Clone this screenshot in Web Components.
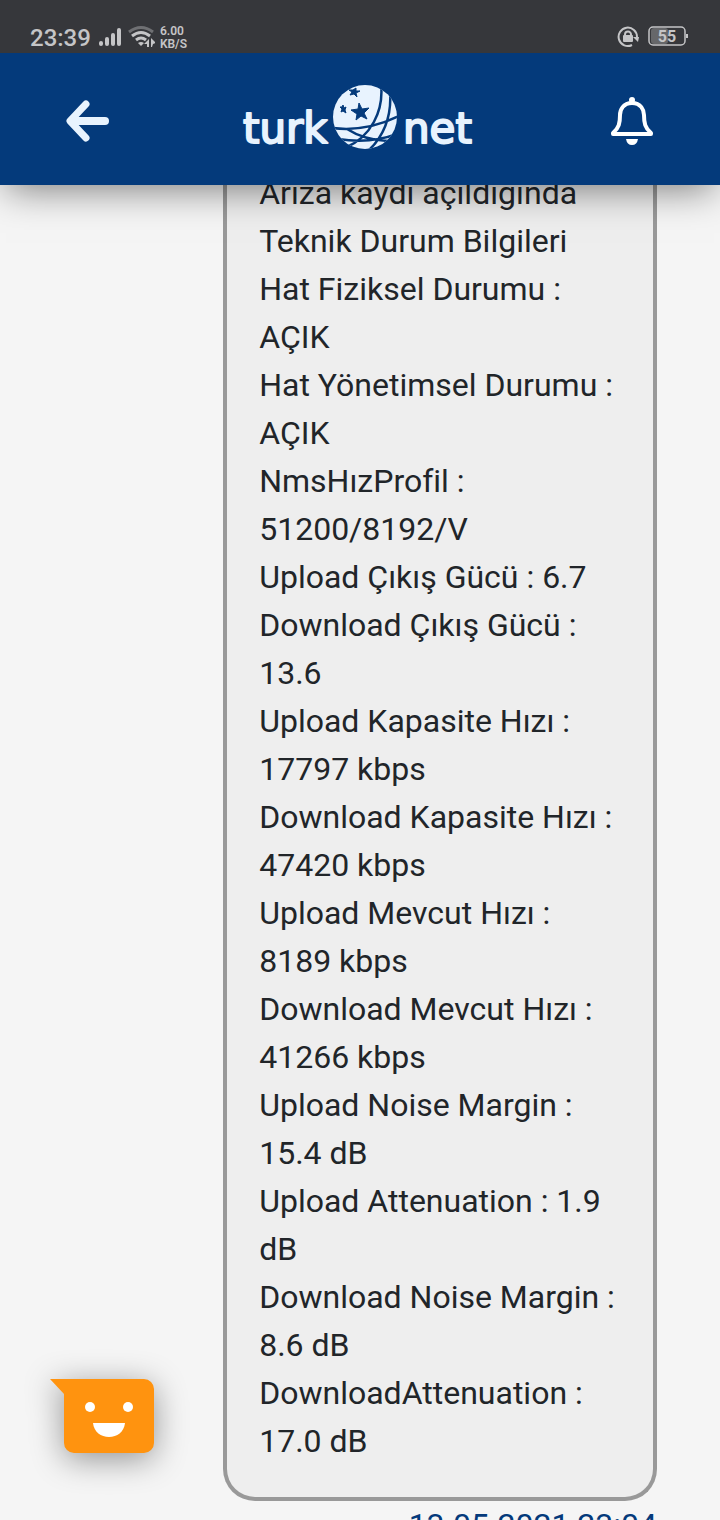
<!DOCTYPE html>
<html lang="tr">
<head>
<meta charset="utf-8">
<meta name="viewport" content="width=device-width">
<title>TurkNet</title>
<style>
html, body { margin: 0; height: 100%; }
body { background: #f5f5f5; overflow: hidden; font-family: Roboto, sans-serif; color: #212529; }
</style>
</head>
<body>
<support-app>
  <status-bar slot="top"></status-bar>
  <app-header slot="top"></app-header>
  <chat-message time="13.05.2021 23:04">Arıza kaydı açıldığında Teknik Durum Bilgileri<br>Hat Fiziksel Durumu : AÇIK<br>Hat Yönetimsel Durumu : AÇIK<br>NmsHızProfil : 51200/8192/V<br>Upload Çıkış Gücü : 6.7<br>Download Çıkış Gücü : 13.6<br>Upload Kapasite Hızı : 17797 kbps<br>Download Kapasite Hızı : 47420 kbps<br>Upload Mevcut Hızı : 8189 kbps<br>Download Mevcut Hızı : 41266 kbps<br>Upload Noise Margin : 15.4 dB<br>Upload Attenuation : 1.9 dB<br>Download Noise Margin : 8.6 dB<br>DownloadAttenuation : 17.0 dB</chat-message>
  <chat-launcher slot="overlay"></chat-launcher>
</support-app>

<script>
const define = (name, html, setup) => {
  const template = document.createElement('template');
  template.innerHTML = html;
  customElements.define(name, class extends HTMLElement {
    constructor() {
      super();
      this.attachShadow({ mode: 'open' }).append(template.content.cloneNode(true));
    }
    connectedCallback() { if (setup) setup(this); }
  });
};

define('support-app', `
<style>
:host { display: flex; flex-direction: column; height: 100vh; overflow: hidden; }
.top { position: relative; z-index: 1; flex: none; box-shadow: 0 10px 36px -6px rgba(0,0,0,.5); }
main { flex: 1; min-height: 0; overflow: hidden; }
</style>
<div class="top"><slot name="top"></slot></div>
<main><slot></slot></main>
<slot name="overlay"></slot>`);

define('status-bar', `
<style>
:host { display: flex; justify-content: space-between; align-items: flex-end; box-sizing: border-box; height: 53px; padding: 0 31px 0 30px; background: #36373b; color: #c5c5c7; }
.group { display: flex; align-items: center; height: 32px; }
.time { font-size: 24px; font-weight: 500; line-height: 32px; padding-top: 2px; }
.signal { margin-left: 8px; }
.wifi { margin-left: 5px; }
.rate { margin-left: 5px; padding-top: 2px; font-size: 12px; font-weight: 600; line-height: 13px; }
svg { display: block; }
.battery { margin-left: 9px; }
</style>
<div class="group">
  <span class="time">23:39</span>
  <svg class="signal" width="24" height="20" fill="currentColor"><rect y="14" width="4" height="5" rx="2"/><rect x="6" y="10" width="4" height="9" rx="2"/><rect x="12" y="6" width="4" height="13" rx="2"/><rect x="18" y="1" width="4" height="18" rx="2"/></svg>
  <svg class="wifi" width="27" height="24" fill="none" stroke="currentColor" stroke-width="3"><path d="M1 7Q13-2 25 7" opacity=".4"/><path d="M4 11Q13 4 22 11M8 15Q13 11 18 15"/><path d="M10 18q3-2 6 0l-3 3z" fill="currentColor" stroke="none"/><path d="M16 19l5-5v8h-2v-3zM23 13l5 5-3 1-1 3h-1z" fill="currentColor" stroke="none"/></svg>
  <span class="rate">6.00<br>KB/S</span>
</div>
<div class="group">
  <svg width="22" height="24" fill="none" stroke="currentColor" stroke-width="2"><path d="M15 20A9.200 9.200 0 1 1 20 12"/><path d="M16 12h6l-1 5z" fill="currentColor" stroke="none"/><path d="M8 11V9.500a3 3 0 0 1 6 0V11"/><rect x="6" y="10" width="10" height="7" rx="1" fill="currentColor" stroke="none"/></svg>
  <svg class="battery" width="41" height="22"><rect x="3" y="2" width="17" height="16" rx="3" fill="#66676a"/><rect x="1" y="1" width="36" height="18" rx="4" fill="none" stroke="currentColor" stroke-width="1.500"/><path d="M38 8h2v4h-2" fill="currentColor"/><text x="19" y="16" text-anchor="middle" font-size="16" font-weight="700" fill="currentColor">55</text></svg>
</div>`);

define('app-header', `
<style>
:host { display: flex; align-items: center; justify-content: space-between; box-sizing: border-box; height: 132px; padding: 0 64px; background: #043a7b; color: #e8f3fe; }
button { display: block; padding: 0; border: 0; background: none; color: inherit; }
svg { display: block; }
.bell { color: #fff; }
</style>
<button aria-label="Geri"><svg width="48" height="48" fill="none" stroke="currentColor" stroke-width="7" stroke-linecap="round" stroke-linejoin="round"><path d="M22 9L6 26l16 17"/><path d="M9 26h32" stroke-width="8"/></svg></button>
<turknet-logo></turknet-logo>
<button class="bell" aria-label="Bildirimler"><svg width="48" height="56" fill="none" stroke="currentColor" stroke-width="4" stroke-linejoin="round" stroke-linecap="round"><path d="M24 12C15 12 12 19 12 24c0 8-1 13-7 18v1h38v-1c-6-5-7-10-7-18 0-5-3-12-12-12z"/><circle cx="24" cy="9" r="3" fill="currentColor" stroke="none"/><path d="M18 48h12q-1 6-6 6t-6-6z" fill="currentColor" stroke="none"/></svg></button>`);

define('turknet-logo', `
<style>
:host { display: block; }
svg { display: block; overflow: visible; }
text { font: 42px "DejaVu Sans", sans-serif; fill: currentColor; stroke: currentColor; stroke-width: 2px; stroke-linejoin: round; }
</style>
<svg width="238" height="72" role="img" aria-label="turk net">
  <defs><clipPath id="ball"><circle cx="124" cy="34" r="32"/></clipPath></defs>
  <text x="2" y="60">turk</text>
  <circle cx="124" cy="34" r="32" fill="currentColor"/>
  <g clip-path="url(#ball)" fill="none" stroke="#043a7b" stroke-width="2.500">
    <path d="M91 45C115 48 138 43 158 33M97 56Q130 61 156 51M140 1C143 28 130 54 104 65M149 7C151 32 143 53 127 68M106 46Q123 57 147 58"/>
  </g>
  <g fill="#043a7b" stroke="#043a7b" stroke-width="1" stroke-linejoin="round">
    <path d="M118 20l3 6 7-1-5 5 3 6-6-3-5 4 1-6-6-4 7-1z"/>
    <path d="M115 5l0 3h4l-4 2 1 4-3-3-4 1 2-3-3-2h4z"/>
    <path d="M102 22l1 3 2-1-1 3 1 3-3-2-2 1 1-3-2-2h2z"/>
  </g>
  <text x="162" y="60">net</text>
</svg>`);

define('chat-message', `
<style>
:host { display: block; margin: -16px 63px 0 31%; font-size: 32px; line-height: 48px; }
.bubble { padding: 0 32px 32px; border: 4px solid #999; border-top: 0; border-radius: 0 0 32px 32px; background: #eee; }
time { display: block; color: #043a7b; text-align: right; white-space: nowrap; }
</style>
<div class="bubble"><slot></slot></div>
<time></time>`, el => {
  el.shadowRoot.querySelector('time').textContent = el.getAttribute('time');
});

define('chat-launcher', `
<style>
:host { position: fixed; z-index: 2; left: 50px; bottom: 67px; }
button { display: block; padding: 0; border: 0; background: none; }
svg { display: block; overflow: visible; filter: drop-shadow(0 6px 16px rgba(0,0,0,.4)); }
</style>
<button aria-label="Sohbet"><svg width="104" height="74"><path d="M0 0h94a10 10 0 0 1 10 10v54a10 10 0 0 1-10 10H24a10 10 0 0 1-10-10V15z" fill="#ff930f"/><circle cx="40" cy="28" r="5" fill="#fff"/><circle cx="78" cy="28" r="5" fill="#fff"/><path d="M43 44h32c-1 9-8 14-16 14s-15-5-16-14z" fill="#fff"/></svg></button>`);
</script>
</body>
</html>
